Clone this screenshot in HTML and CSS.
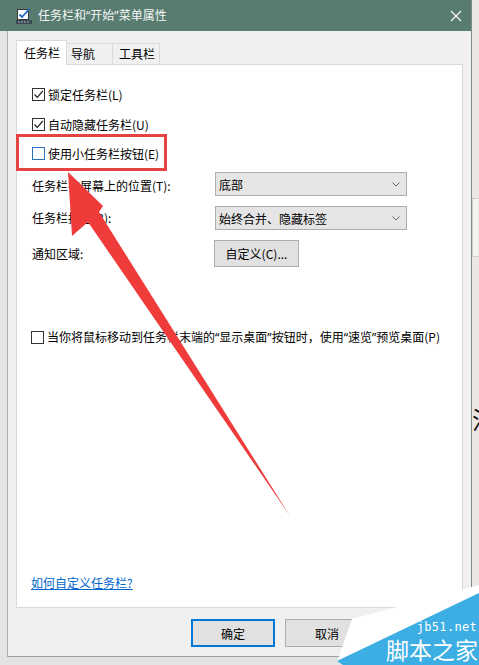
FILE: index.html
```html
<!DOCTYPE html>
<html lang="zh-CN">
<head>
<meta charset="utf-8">
<title>任务栏和“开始”菜单属性</title>
<link rel="stylesheet" href="styles.css">
</head>
<body>
<div class="screen">
  <div class="window">
    <div class="titlebar">
      <svg class="app-icon" viewBox="0 0 16 16">
        <rect x="1.5" y="1.5" width="11" height="10" fill="#fff" stroke="#3a3a3a"/>
        <path d="M3.5 6.5 L6 9 L13.5 0.8" fill="none" stroke="#1f6fc4" stroke-width="1.8"/>
        <rect x="0" y="12" width="16" height="4" fill="#3b4a52"/>
        <rect x="2" y="13.5" width="2" height="1" fill="#9fb4c0"/>
        <rect x="5" y="13.5" width="2" height="1" fill="#9fb4c0"/>
        <rect x="8" y="13.5" width="2" height="1" fill="#9fb4c0"/>
        <rect x="11" y="13.5" width="2" height="1" fill="#9fb4c0"/>
      </svg>
      <span class="title">任务栏和<span class="q">“</span>开始<span class="q">”</span>菜单属性</span>
      <svg class="close" viewBox="0 0 12 12">
        <path d="M1 1 L11 11 M11 1 L1 11" stroke="#fff" stroke-width="1.1" fill="none"/>
      </svg>
    </div>
    <div class="body">
      <div class="tabs">
        <div class="tab active">任务栏</div>
        <div class="tab tab-nav">导航</div>
        <div class="tab tab-tools">工具栏</div>
      </div>
      <div class="panel">
        <div class="check r1">
          <span class="box"><svg viewBox="0 0 11 11"><path d="M1.5 5.5 L4.3 8.3 L9.8 2" fill="none" stroke="#222" stroke-width="1.2"/></svg></span>
          <span>锁定任务栏(L)</span>
        </div>
        <div class="check r2">
          <span class="box"><svg viewBox="0 0 11 11"><path d="M1.5 5.5 L4.3 8.3 L9.8 2" fill="none" stroke="#222" stroke-width="1.2"/></svg></span>
          <span>自动隐藏任务栏(U)</span>
        </div>
        <div class="check r3">
          <span class="box focus"></span>
          <span>使用小任务栏按钮(E)</span>
        </div>
        <div class="form">
          <span class="lbl lbl-a">任务栏在屏幕上的位置(T):</span>
          <div class="select"><span>底部</span><svg class="chev" viewBox="0 0 8 5"><path d="M0.5 0.5 L4 4 L7.5 0.5" fill="none" stroke="#666"/></svg></div>
          <span class="lbl">任务栏按钮(B):</span>
          <div class="select"><span>始终合并、隐藏标签</span><svg class="chev" viewBox="0 0 8 5"><path d="M0.5 0.5 L4 4 L7.5 0.5" fill="none" stroke="#666"/></svg></div>
          <span class="lbl">通知区域:</span>
          <button class="custom">自定义(C)...</button>
        </div>
        <div class="check long">
          <span class="box"></span>
          <span>当你将鼠标移动到任务栏末端的<span class="q">“</span>显示桌面<span class="q">”</span>按钮时，使用<span class="q">“</span>速览<span class="q">”</span>预览桌面(P)</span>
        </div>
        <a class="link" href="#">如何自定义任务栏?</a>
      </div>
      <div class="buttons">
        <button class="btn default">确定</button>
        <button class="btn">取消</button>
        <button class="btn" aria-label="应用(A)"></button>
      </div>
    </div>
  </div>
  <div class="desktop">
    <div class="desk-box"></div>
    <span class="desk-char">注</span>
  </div>

  <svg class="annot" viewBox="0 0 479 665">
    <rect x="17.5" y="135.5" width="148" height="34" fill="none" stroke="#e84343" stroke-width="3"/>
    <polygon points="68,172 103,206 99,212 290,516 88,222 72,236" fill="#f03b3b"/>
  </svg>

  <div class="watermark">
    <svg class="wm-bg" viewBox="0 0 142 80">
      <polygon points="0,77 15,34 142,0 142,9" fill="#ffffff"/>
      <polygon points="0,76 142,8 142,80 6,80" fill="#3caee3"/>
    </svg>
    <span class="wm-url">jb51.net</span>
    <span class="wm-name">脚本之家</span>
  </div>
</div>
</body>
</html>
```

FILE: styles.css
```css
* { box-sizing: border-box; }

html, body {
  margin: 0;
  padding: 0;
}

body {
  width: 479px;
  height: 665px;
  overflow: hidden;
  font-family: "Noto Sans CJK SC", "Noto Sans", sans-serif;
  font-size: 12px;
  color: #000;
}

.q {
  font-family: "Noto Sans", "Liberation Sans", sans-serif;
}

.screen {
  position: relative;
  display: flex;
  width: 479px;
  height: 665px;
  background: #e3e3e3;
  overflow: hidden;
}

.window {
  width: 472px;
  height: 657px;
  flex: none;
  display: flex;
  flex-direction: column;
  background: #e4e4e4;
  border-right: 1px solid #7d8d87;
}

.titlebar {
  height: 31px;
  flex: none;
  display: flex;
  align-items: center;
  padding-left: 16px;
  background: #587c6f;
  color: #fff;
}

.app-icon {
  width: 16px;
  height: 16px;
  flex: none;
}

.title {
  margin-left: 6px;
  line-height: 16px;
  color: #f4f7f6;
}

.close {
  width: 12px;
  height: 12px;
  margin-left: auto;
  margin-right: 9px;
}

.body {
  flex: 1;
  margin-left: 7px;
  border-left: 1px solid #b0b0b0;
  border-bottom: 1px solid #a0a0a0;
  background: #f0f0f0;
  padding: 9px 8px 9px 8px;
  display: flex;
  flex-direction: column;
}

.tabs {
  display: flex;
  align-items: flex-end;
  height: 24px;
  flex: none;
  position: relative;
  z-index: 1;
}

.tab {
  height: 21px;
  border: 1px solid #d9d9d9;
  border-bottom: none;
  background: #f0f0f0;
  line-height: 20px;
  padding-left: 4px;
  white-space: nowrap;
}

.tab + .tab { border-left: none; }

.tab.active {
  width: 51px;
  height: 25px;
  margin-bottom: -1px;
  background: #fff;
  padding-left: 7px;
  line-height: 23px;
}

.tab-nav { width: 46px; padding-left: 4px; }
.tab-tools { width: 47px; padding-left: 6px; }

.panel {
  height: 544px;
  flex: none;
  background: #fff;
  border: 1px solid #d9d9d9;
  display: flex;
  flex-direction: column;
  padding: 0 15px 14px 15px;
}

.check {
  display: flex;
  align-items: center;
  height: 20px;
  white-space: nowrap;
}

.r1 { margin-top: 19px; }
.r2 { margin-top: 10px; }
.r3 { margin-top: 9px; }

.box {
  width: 13px;
  height: 13px;
  flex: none;
  border: 1px solid #333;
  background: #fff;
  margin-right: 3px;
  display: flex;
}

.box svg {
  width: 11px;
  height: 11px;
}

.box.focus { border-color: #2a72c0; }

.form {
  margin-top: 9px;
  display: grid;
  grid-template-columns: 183px 192px;
  row-gap: 10px;
  align-items: center;
}

.lbl {
  white-space: nowrap;
  line-height: 20px;
}

.lbl-a { padding-top: 3px; }

.select {
  height: 24px;
  border: 1px solid #adadad;
  background: #e5e5e5;
  display: flex;
  align-items: center;
  justify-content: space-between;
  padding-left: 3px;
  padding-right: 6px;
}

.chev {
  width: 8px;
  height: 5px;
}

.custom {
  width: 85px;
  height: 27px;
  margin-left: -1px;
  justify-self: start;
  border: 1px solid #adadad;
  background: #e1e1e1;
  font: inherit;
  color: #000;
  padding: 0;
}

.long {
  margin-top: 60px;
  margin-left: -1px;
}

.link {
  margin-top: auto;
  margin-left: -1px;
  line-height: 20px;
  color: #0066cc;
  text-decoration: underline;
  align-self: flex-start;
}

.buttons {
  display: flex;
  justify-content: flex-end;
  gap: 10px;
  margin-top: 11px;
}

.btn {
  width: 84px;
  height: 28px;
  border: 1px solid #adadad;
  background: #e1e1e1;
  font: inherit;
  color: #000;
  padding: 0;
}

.btn.default { border: 2px solid #0078d7; }

.desktop {
  flex: 1;
  background: #ebe8e3;
  display: flex;
  flex-direction: column;
  overflow: visible;
}

.desk-box {
  margin-top: 198px;
  height: 59px;
  background: #f4f3f1;
  border: 1px solid #d2d0cc;
  border-right: none;
}

.desk-char {
  margin-top: 150px;
  font-size: 24px;
  line-height: 24px;
  color: #111;
  white-space: nowrap;
}

.annot {
  position: absolute;
  left: 0;
  top: 0;
  width: 479px;
  height: 665px;
  pointer-events: none;
}

.watermark {
  position: absolute;
  right: 0;
  bottom: 0;
  width: 142px;
  height: 80px;
  pointer-events: none;
}

.wm-bg {
  position: absolute;
  left: 0;
  top: 0;
  width: 142px;
  height: 80px;
}

.wm-url {
  position: absolute;
  right: 2px;
  top: 36px;
  font-family: "DejaVu Sans Mono", monospace;
  font-size: 12px;
  line-height: 13px;
  letter-spacing: 0.3px;
  color: #fff;
}

.wm-name {
  position: absolute;
  right: 1px;
  top: 53px;
  font-size: 23px;
  line-height: 23px;
  color: #fff;
  white-space: nowrap;
}
```
